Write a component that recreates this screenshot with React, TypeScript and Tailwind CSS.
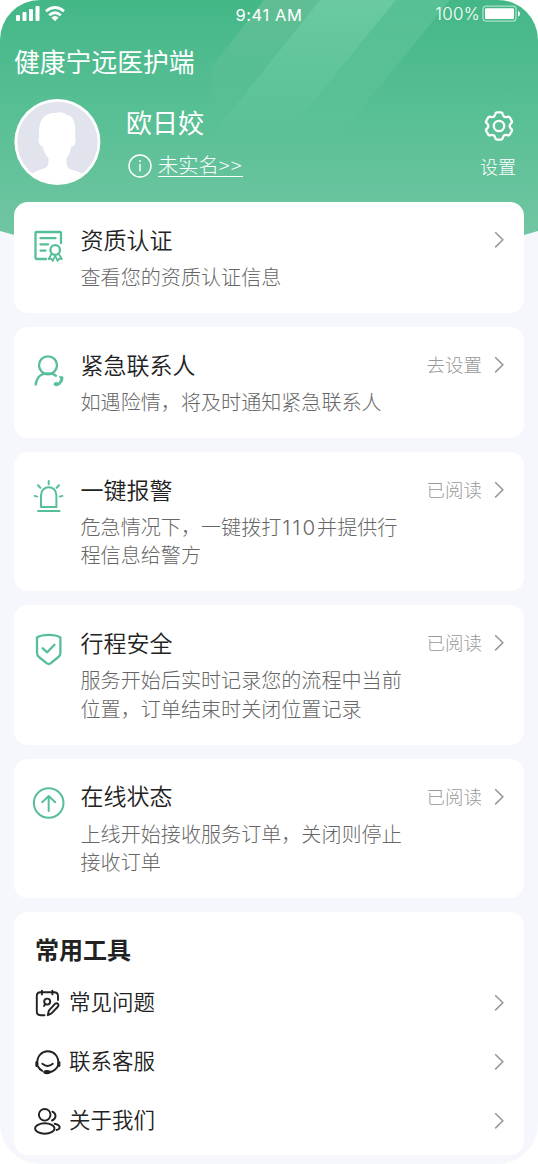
import type { ReactNode } from "react";

type Card = {
  title: string;
  lines: ReactNode[];
  status?: string;
  icon: ReactNode;
};

const green = {
  width: 36,
  height: 36,
  viewBox: "0 0 36 36",
  fill: "none",
  stroke: "#56bf97",
  strokeWidth: 2.3,
  strokeLinecap: "round" as const,
  strokeLinejoin: "round" as const,
};

const dark = {
  width: 28,
  height: 28,
  viewBox: "0 0 28 28",
  fill: "none",
  stroke: "#222222",
  strokeWidth: 1.9,
  strokeLinecap: "round" as const,
  strokeLinejoin: "round" as const,
};

function CertificateIcon() {
  return (
    <svg {...green}>
      <path d="M15 32H5.5Q4.5 32 4.5 31V6Q4.5 5 5.5 5H29Q30 5 30 6V16" />
      <path d="M9.5 11.2H24.5M9.5 17.4H17M9.5 23.6H14.5" />
      <circle cx="24.2" cy="23" r="4.8" />
      <path
        d="M20.5 27L17.6 32L20.4 31.6L21.8 34L24.2 28.5L26.6 34L28 31.6L30.8 32L27.9 27"
        strokeWidth="1.8"
      />
    </svg>
  );
}

function ContactIcon() {
  return (
    <svg {...green}>
      <circle cx="17" cy="13.3" r="9" />
      <path d="M4.7 32.5C5.7 25 10.5 21.3 16 21.3C20.5 21.3 23.4 22.3 25 23.8" />
      <path
        d="M28.8 24.6L31.8 24.8C33 29 29 34.5 24 33.7Q22.5 32.5 23.2 31.2L25.6 30.2L27 31.2Q29.3 29.8 29.5 27.4Z"
        fill="#56bf97"
        strokeWidth="0.8"
      />
    </svg>
  );
}

function AlarmIcon() {
  return (
    <svg {...green} strokeWidth="2">
      <path d="M10 30V18.2C10 7.6 25.4 7.6 25.4 18.2V30Z" />
      <path d="M7 34H28.5" />
      <path d="M17.7 4V7.3M7 8.3L9.4 10.8M28 8.3L25.6 10.8M3.7 18.9L6.3 19.6M31.4 18.9L28.8 19.6" />
    </svg>
  );
}

function ShieldIcon() {
  return (
    <svg {...green}>
      <path d="M6 7.4C12 4 23.4 4 29.4 7.4V23Q29.4 25.5 27.4 27L19.5 33.4Q17.7 34.6 15.9 33.4L8 27Q6 25.5 6 23Z" />
      <path d="M11.7 18.3L16.2 22.3L23.5 14.8" />
    </svg>
  );
}

function OnlineIcon() {
  return (
    <svg {...green} strokeWidth="2">
      <circle cx="17.7" cy="19" r="14.8" />
      <path d="M17.7 27V12.3M11.2 18.3L17.7 12L24.2 18.3" />
    </svg>
  );
}

function QuestionIcon() {
  return (
    <svg {...dark}>
      <path d="M11.5 26.2H7.5Q3.8 26.2 3.8 22.5V7Q3.8 3.3 7.5 3.3H21Q25 3.3 25 7V11" />
      <path d="M8.9 1.8V5.4M19.4 1.8V5.4" />
      <circle cx="14.2" cy="12.6" r="3" />
      <path d="M11 17L12.3 15" />
      <path d="M14.8 26.2L15.8 21.7L22 14.8Q24.2 13.5 25.3 15.4Q25.9 16.8 24.6 18L18.5 24.4Z" />
    </svg>
  );
}

function ServiceIcon() {
  return (
    <svg {...dark}>
      <path d="M4.3 16.4C3.6 7.6 9 3.3 14.8 3.3C20.6 3.3 26 7.6 25.3 16.4C24.6 20.6 20 24.1 16 24.3" />
      <path d="M3.8 14.4V17.6M25.9 14.4V17.6" strokeWidth="3" />
      <path d="M4.8 18.2Q6.5 21.4 9.2 22.8" />
      <path d="M9.3 15.8Q14.6 20 19.8 15.8" />
      <ellipse cx="14" cy="24.1" rx="3.2" ry="1.5" fill="#222222" strokeWidth="1.2" />
    </svg>
  );
}

function PeopleIcon() {
  return (
    <svg {...dark}>
      <circle cx="11.7" cy="7.8" r="5.8" />
      <ellipse cx="11.8" cy="21.5" rx="9.7" ry="5.2" />
      <path d="M19.4 4.7C23.8 6.8 23.4 11.7 19 13.5M21.7 16.8C27.9 18.2 27.9 22 23.6 23" />
    </svg>
  );
}

function GearIcon() {
  return (
    <svg width="32" height="32" viewBox="-16 -16 32 32" fill="none" stroke="white" strokeWidth="2.3" strokeLinecap="round">
      {[0, 60, 120, 180, 240, 300].map((angle) => (
        <path
          key={angle}
          transform={`rotate(${angle})`}
          d="M-5.4-9.3Q-4.1-9.9-3.8-11.6Q-3.5-13.6-1.8-13.6H1.8Q3.5-13.6 3.8-11.6Q4.1-9.9 5.4-9.3"
        />
      ))}
      <circle r="5.2" />
    </svg>
  );
}

function Chevron() {
  return (
    <svg className="shrink-0" width="10" height="18" viewBox="0 0 10 18" fill="none" stroke="#999999" strokeWidth="1.6">
      <path d="M1.2 1.2L8.8 8.8L1.2 16.4" />
    </svg>
  );
}

const cards: Card[] = [
  { title: "资质认证", lines: ["查看您的资质认证信息"], icon: <CertificateIcon /> },
  { title: "紧急联系人", lines: ["如遇险情，将及时通知紧急联系人"], status: "去设置", icon: <ContactIcon /> },
  {
    title: "一键报警",
    lines: [
      <>
        危急情况下，一键拨打<span className="ml-px font-[Inter] text-[20.5px] tracking-[2px]">110</span>并提供行
      </>,
      "程信息给警方",
    ],
    status: "已阅读",
    icon: <AlarmIcon />,
  },
  { title: "行程安全", lines: ["服务开始后实时记录您的流程中当前", "位置，订单结束时关闭位置记录"], status: "已阅读", icon: <ShieldIcon /> },
  { title: "在线状态", lines: ["上线开始接收服务订单，关闭则停止", "接收订单"], status: "已阅读", icon: <OnlineIcon /> },
];

const tools = [
  { label: "常见问题", icon: <QuestionIcon /> },
  { label: "联系客服", icon: <ServiceIcon /> },
  { label: "关于我们", icon: <PeopleIcon /> },
];

function Backdrop() {
  return (
    <svg className="absolute left-0 top-0" width="538" height="280" viewBox="0 0 538 280">
      <defs>
        <linearGradient id="sky" x1="0" y1="0" x2="0" y2="1">
          <stop offset="0" stopColor="#44b787" />
          <stop offset="0.4" stopColor="#57bf94" />
          <stop offset="0.9" stopColor="#72c6a3" />
        </linearGradient>
        <linearGradient id="ray" gradientUnits="userSpaceOnUse" x1="0" y1="0" x2="0" y2="135">
          <stop offset="0" stopColor="#b5eed4" stopOpacity="0.34" />
          <stop offset="1" stopColor="#b5eed4" stopOpacity="0" />
        </linearGradient>
        <linearGradient id="haze" gradientUnits="userSpaceOnUse" x1="0" y1="0" x2="0" y2="110">
          <stop offset="0" stopColor="#b0cdb8" stopOpacity="0.27" />
          <stop offset="0.6" stopColor="#b0d8c0" stopOpacity="0.08" />
          <stop offset="1" stopColor="#b0e5cc" stopOpacity="0" />
        </linearGradient>
      </defs>
      <path d="M0 0H538V231Q269 310 0 231Z" fill="url(#sky)" />
      <path d="M264 0H320L212 135V66Z" fill="url(#haze)" />
      <path d="M320 0H396L286 135H212Z" fill="url(#ray)" />
      <path d="M396 0H450L340 135H286Z" fill="url(#ray)" opacity="0.5" />
    </svg>
  );
}

function StatusBar() {
  return (
    <div className="grid h-8 grid-cols-3 items-start px-[15px] pt-1.5 text-white">
      <div className="flex items-center gap-[5px]">
        <svg width="25" height="16" viewBox="0 0 25 16" fill="white">
          <rect x="1" y="9" width="4" height="6" rx="1" />
          <rect x="7.5" y="6" width="4" height="9" rx="1" />
          <rect x="14" y="3" width="4" height="12" rx="1" />
          <rect x="20.5" y="0" width="4" height="15" rx="1" />
        </svg>
        <svg width="20" height="16" viewBox="0 0 20 16" fill="none" stroke="white" strokeWidth="2.7">
          <path d="M1 5.2Q10-2.2 19 5.2M4.2 9.2Q10 4.3 15.8 9.2" />
          <path d="M6.3 11.6Q10 8.4 13.7 11.6L10 15.3Z" fill="white" stroke="none" />
        </svg>
      </div>
      <span className="text-center font-[Inter] text-[16.5px] leading-[19px] font-normal tracking-[0.6px] whitespace-nowrap">9:41 AM</span>
      <div className="-mt-px mr-[3px] flex items-center justify-end gap-0.5">
        <span className="font-[Inter] text-[17px] leading-4 font-light tracking-[0.3px]">100%</span>
        <svg width="38" height="18" viewBox="0 0 38 18" fill="none">
          <rect x="1" y="1.1" width="33" height="15" rx="3" stroke="white" strokeOpacity="0.55" strokeWidth="1.3" />
          <rect x="3" y="3.2" width="29" height="10.8" rx="1.2" fill="white" />
          <path d="M36 5.7Q38 6.9 38 8.7T36 11.7Z" fill="white" />
        </svg>
      </div>
    </div>
  );
}

function Profile() {
  return (
    <div className="flex h-[86px] items-start px-3.5">
      <svg width="87" height="86" viewBox="0 0 87 86">
        <defs>
          <clipPath id="avatar">
            <circle cx="43.4" cy="43" r="40.3" />
          </clipPath>
        </defs>
        <circle cx="43.4" cy="43" r="43" fill="white" />
        <circle cx="43.4" cy="43" r="40.3" fill="#e1e4ed" />
        <path
          clipPath="url(#avatar)"
          d="M25 37C24 21 30 14 41 14Q49 12 53 16C60 17 62 25 61 37Q63 47 57 48Q56 56 52.5 59V64Q53 70 59 71Q67 73 73 78V90H13V78Q19 73 28 70Q34 69 34.5 64V59Q30 55 29 48Q23 46 25 37Z"
          fill="white"
        />
      </svg>
      <div className="ml-[25px] flex flex-1 flex-col text-white">
        <h2 className="mt-[5px] text-[26px] leading-9 font-normal">欧日姣</h2>
        <div className="mt-2.5 flex items-center gap-1.5 pl-0.5">
          <svg className="mt-1" width="24" height="24" viewBox="0 0 24 24" fill="none" stroke="white" strokeWidth="1.4">
            <circle cx="12" cy="12" r="11" />
            <path d="M12 9.8V17.5M12 6V8" />
          </svg>
          <a className="mt-0.5 border-b border-white text-[20.3px] leading-[23px] font-light">
            未实名<span className="tracking-[1px]">&gt;&gt;</span>
          </a>
        </div>
      </div>
      <div className="mr-2 flex flex-col items-center pt-[11px] text-white">
        <span className="ml-0.5">
          <GearIcon />
        </span>
        <span className="mt-3 text-[18px] leading-6 font-light">设置</span>
      </div>
    </div>
  );
}

function InfoCard({ title, lines, status, icon }: Card) {
  return (
    <section className="flex rounded-[14px] bg-white pt-5 pr-5 pb-[21.2px] pl-[17px]">
      <div className="mt-[5px] w-[49.5px] shrink-0">{icon}</div>
      <div className="min-w-0 flex-1">
        <div className="flex h-[34px] items-center">
          <h3 className="flex-1 text-[23px] font-[350] text-[#222222]">{title}</h3>
          {status && <span className="mt-0.5 mr-3 text-[18.5px] font-light text-[#999999]">{status}</span>}
          <div className="mt-0.5">
            <Chevron />
          </div>
        </div>
        <p className="mt-[6.9px] text-[20.08px] leading-[28.7px] font-light whitespace-nowrap text-[#666666]">
          {lines.map((line, i) => (
            <span key={i} className="block h-[28.7px]">
              {line}
            </span>
          ))}
        </p>
      </div>
    </section>
  );
}

export default function App() {
  return (
    <div className="h-[1164px] w-[538px] overflow-hidden bg-white font-['Noto_Sans_CJK_SC',sans-serif]">
      <div className="relative h-full overflow-hidden rounded-[40px] bg-[#f6f7fc]">
        <Backdrop />
        <div className="relative">
          <StatusBar />
          <h1 className="mt-[9px] h-[58px] px-3.5 text-[25.8px] leading-10 font-normal text-white">健康宁远医护端</h1>
          <Profile />
          <main className="mt-[17.3px] flex flex-col gap-3.5 px-3.5">
            {cards.map((card) => (
              <InfoCard key={card.title} {...card} />
            ))}
            <section className="h-[243px] rounded-[14px] bg-white pt-[18.5px] pr-5 pl-[21px]">
              <h3 className="text-[24px] leading-9 font-bold text-[#222222]">常用工具</h3>
              <ul className="mt-[7px]">
                {tools.map((tool) => (
                  <li key={tool.label} className="flex h-[58.8px] items-center">
                    <span className="-ml-0.5 w-9">{tool.icon}</span>
                    <span className="-mt-[3px] flex-1 text-[21.5px] font-[350] text-[#222222]">{tool.label}</span>
                    <Chevron />
                  </li>
                ))}
              </ul>
            </section>
          </main>
        </div>
      </div>
    </div>
  );
}
